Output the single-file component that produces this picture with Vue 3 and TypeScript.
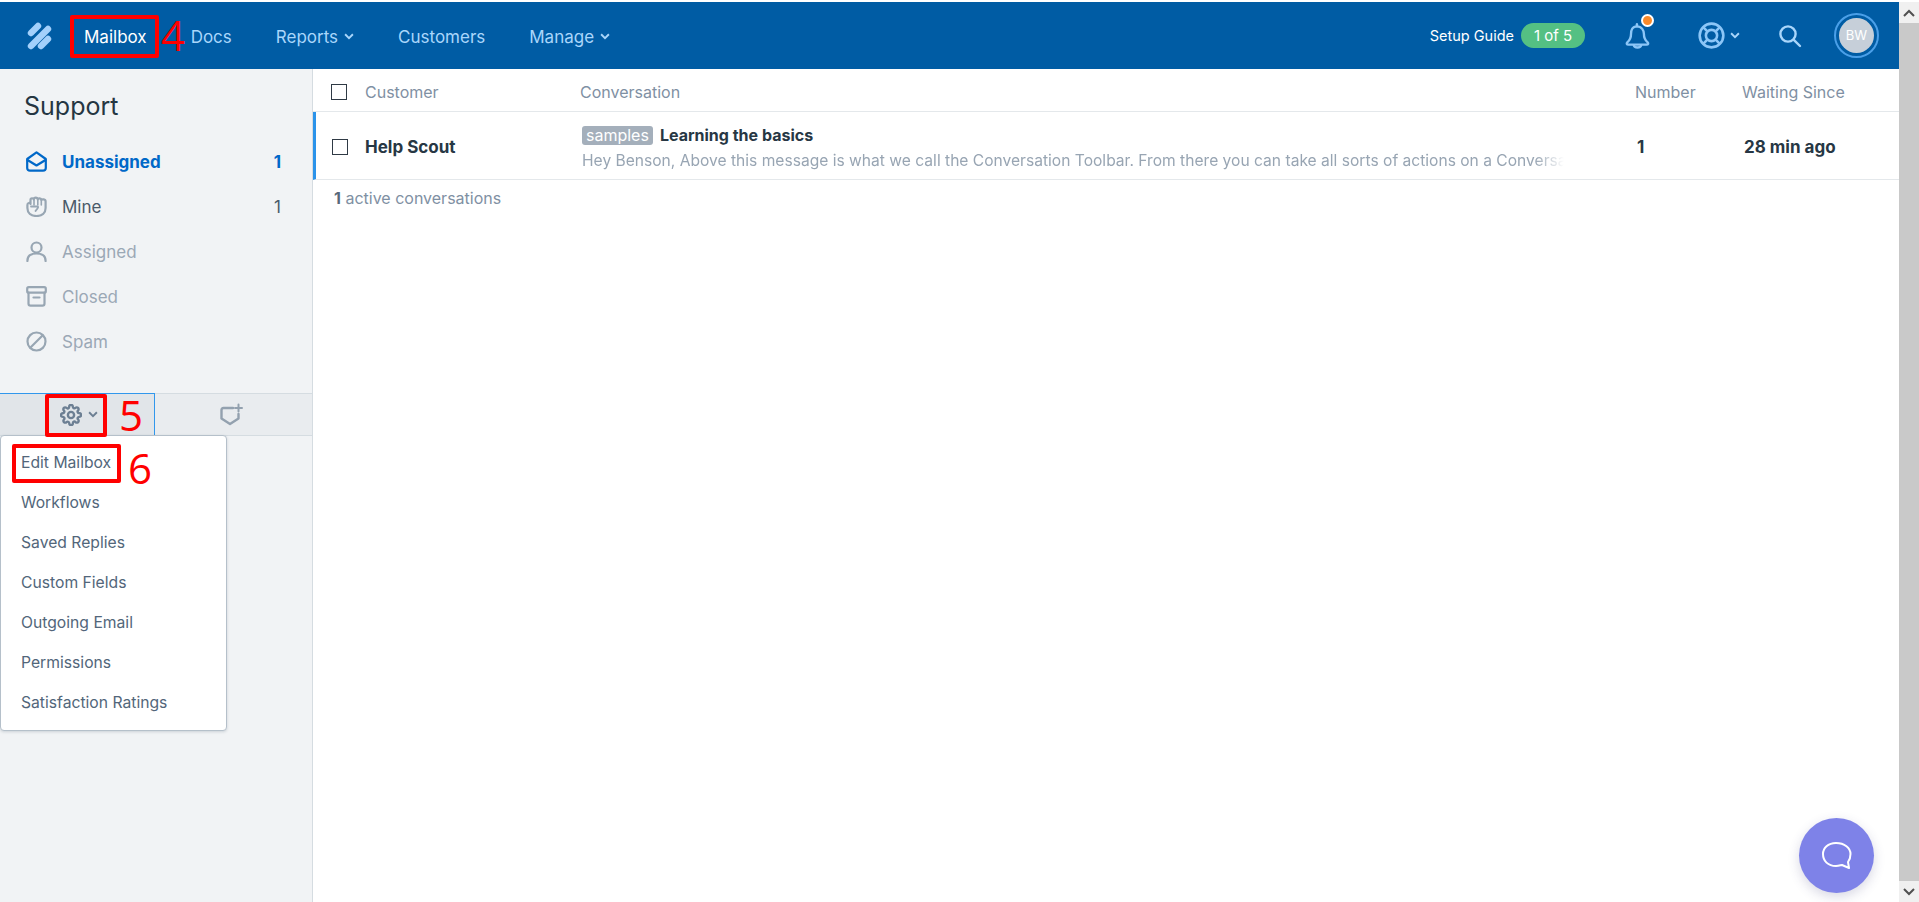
<script setup lang="ts">
const navLinks = [
  { label: 'Mailbox', active: true },
  { label: 'Docs' },
  { label: 'Reports', caret: true },
  { label: 'Customers' },
  { label: 'Manage', caret: true },
]

const folders = [
  { label: 'Unassigned', count: 1, kind: 'active', icon: 'inbox' },
  { label: 'Mine', count: 1, kind: 'normal', icon: 'hand' },
  { label: 'Assigned', kind: 'muted', icon: 'person' },
  { label: 'Closed', kind: 'muted', icon: 'archive' },
  { label: 'Spam', kind: 'muted', icon: 'ban' },
]

const menuItems = [
  'Edit Mailbox',
  'Workflows',
  'Saved Replies',
  'Custom Fields',
  'Outgoing Email',
  'Permissions',
  'Satisfaction Ratings',
]
</script>

<template>
  <div class="page">
    <div class="main">
      <header class="topbar">
        <svg class="logo" width="25" height="28" viewBox="0 0 25 28" fill="none" stroke="#a3d0fb" stroke-width="6.4" stroke-linecap="round">
          <path d="M4 11 L11 4" />
          <path d="M4 24 L21 7" />
          <path d="M14 24 L21 17" />
        </svg>
        <nav class="nav">
          <a v-for="link in navLinks" :key="link.label" class="nav-link" :class="{ 'nav-active': link.active }">
            {{ link.label }}
            <svg v-if="link.caret" class="caret" width="10" height="7" viewBox="0 0 9 6"><path d="M1 1 L4.5 4.5 L8 1" /></svg>
          </a>
        </nav>
        <div class="top-right">
          <span class="setup">Setup Guide</span>
          <span class="pill">1 of 5</span>
          <span class="bell">
            <svg width="28" height="30" viewBox="0 0 26 28" fill="none" stroke="#8cc6f7" stroke-width="2.2" stroke-linejoin="round" stroke-linecap="round">
              <path d="M12 5 C7.5 5 6.5 9 6.5 12 C6.5 16 5.5 18 3 20 C2 21 2.5 22 4 22 L21 22 C22.5 22 23 21 22 20 C19.5 18 18.5 16 18.5 12 C18.5 9 16.5 5 12 5 Z" />
              <path d="M12 5 V3" />
              <path d="M9 22.5 C9.5 25.5 15.5 25.5 16 22.5" />
            </svg>
            <i class="dot"></i>
          </span>
          <span class="help">
            <svg width="27" height="27" viewBox="0 0 26 26" fill="none" stroke="#8cc6f7" stroke-width="2.5">
              <circle cx="13" cy="13" r="11.4" />
              <circle cx="13" cy="13" r="5.4" />
              <path d="M5 5 L9 9 M21 5 L17 9 M5 21 L9 17 M21 21 L17 17" />
            </svg>
            <svg class="caret" width="10" height="7" viewBox="0 0 9 6"><path d="M1 1 L4.5 4.5 L8 1" /></svg>
          </span>
          <svg class="search" width="24" height="24" viewBox="0 0 24 24" fill="none" stroke="#a9d6fb" stroke-width="2.4" stroke-linecap="round">
            <circle cx="10" cy="10" r="7.6" />
            <path d="M15.8 15.8 L22 22" />
          </svg>
          <span class="avatar-ring"><span class="avatar">BW</span></span>
        </div>
      </header>

      <div class="body">
        <aside class="sidebar">
          <h1 class="title">Support</h1>
          <ul class="folders">
            <li v-for="f in folders" :key="f.label" class="folder" :class="f.kind">
              <svg class="ficon" width="21" height="21" viewBox="0 0 21 21" fill="none" stroke="currentColor" stroke-width="2.2" stroke-linejoin="round" stroke-linecap="round">
                <template v-if="f.icon === 'inbox'">
                  <path d="M1.2 8 L10.5 1.3 L19.8 8 V17 Q19.8 19.6 17 19.6 H4 Q1.2 19.6 1.2 17 Z" />
                  <path d="M1.5 9 L10.5 14.5 L19.5 9" />
                </template>
                <template v-else-if="f.icon === 'hand'">
                  <path d="M1.4 9 C1.4 6.5 4 6.5 4.5 8 V3.8 C4.5 1.8 7.5 1.8 7.8 3.5 C8 1 11.5 1 11.8 3.5 C12.2 1.8 15.2 2 15.3 4 C16 3 19.6 3 19.6 5.5 V12 C19.6 17 16 20 10.5 20 C5 20 1.4 17 1.4 12 Z" />
                  <path d="M8 4 V9 M11.8 4 V9 M15.3 4.5 V9" stroke-width="1.6" />
                  <path d="M5 10.5 H12 C13 12 10.5 13 9.5 15" stroke-width="1.8" />
                </template>
                <template v-else-if="f.icon === 'person'">
                  <circle cx="10.5" cy="6.5" r="5" />
                  <path d="M1.4 20 C1.4 14.5 5 12.5 10.5 12.5 C16 12.5 19.6 14.5 19.6 20" />
                </template>
                <template v-else-if="f.icon === 'archive'">
                  <rect x="1.2" y="1.2" width="18.6" height="5.5" rx="1.5" />
                  <path d="M2.5 6.7 V17.5 Q2.5 19.6 4.5 19.6 H16.5 Q18.5 19.6 18.5 17.5 V6.7" />
                  <path d="M7.5 11.5 H13.5" />
                </template>
                <template v-else>
                  <circle cx="10.5" cy="10.5" r="9" />
                  <path d="M4.5 16.5 L16.5 4.5" />
                </template>
              </svg>
              <span class="flabel">{{ f.label }}</span>
              <span v-if="f.count" class="fcount">{{ f.count }}</span>
            </li>
          </ul>

          <div class="tools">
            <button class="tool tool-open">
              <svg width="22" height="22" viewBox="0 0 24 24" fill="none" stroke="#6c7f93" stroke-width="2.6">
                <circle cx="12" cy="12" r="3.4" />
                <path d="M19.4 15a1.65 1.65 0 0 0 .33 1.82l.06.06a2 2 0 0 1 0 2.83 2 2 0 0 1-2.83 0l-.06-.06a1.65 1.65 0 0 0-1.82-.33 1.65 1.65 0 0 0-1 1.51V21a2 2 0 0 1-2 2 2 2 0 0 1-2-2v-.09A1.65 1.65 0 0 0 9 19.4a1.65 1.65 0 0 0-1.82.33l-.06.06a2 2 0 0 1-2.83 0 2 2 0 0 1 0-2.83l.06-.06a1.65 1.65 0 0 0 .33-1.82 1.65 1.65 0 0 0-1.51-1H3a2 2 0 0 1-2-2 2 2 0 0 1 2-2h.09A1.65 1.65 0 0 0 4.6 9a1.65 1.65 0 0 0-.33-1.82l-.06-.06a2 2 0 0 1 0-2.83 2 2 0 0 1 2.83 0l.06.06a1.65 1.65 0 0 0 1.82.33H9a1.65 1.65 0 0 0 1-1.51V3a2 2 0 0 1 2-2 2 2 0 0 1 2 2v.09a1.65 1.65 0 0 0 1 1.51 1.65 1.65 0 0 0 1.82-.33l.06-.06a2 2 0 0 1 2.83 0 2 2 0 0 1 0 2.83l-.06.06a1.65 1.65 0 0 0-.33 1.82V9a1.65 1.65 0 0 0 1.51 1H21a2 2 0 0 1 2 2 2 2 0 0 1-2 2h-.09a1.65 1.65 0 0 0-1.51 1z" />
              </svg>
              <svg class="caret dark" width="10" height="7" viewBox="0 0 9 6"><path d="M1 1 L4.5 4.5 L8 1" /></svg>
            </button>
            <button class="tool tool-new">
              <svg width="24" height="24" viewBox="0 0 24 24" fill="none" stroke="#93a1af" stroke-width="2.4" stroke-linecap="round" stroke-linejoin="round">
                <path d="M14 5 H4.5 Q2.5 5 2.5 7 V15.5 L11 21 L19.5 15.5 V11" />
                <path d="M19.5 1.5 V8.5 M16 5 H23" stroke-width="2" />
              </svg>
            </button>
          </div>

          <ul class="menu">
            <li v-for="item in menuItems" :key="item" class="menu-item">{{ item }}</li>
          </ul>
        </aside>

        <section class="content">
          <div class="row head">
            <span class="check"></span>
            <span>Customer</span>
            <span>Conversation</span>
            <span>Number</span>
            <span>Waiting Since</span>
          </div>
          <div class="row ticket">
            <span class="check"></span>
            <span class="customer">Help Scout</span>
            <div class="conv">
              <div class="subject"><span class="tag">samples</span><b>Learning the basics</b></div>
              <div class="preview">Hey Benson, Above this message is what we call the Conversation Toolbar. From there you can take all sorts of actions on a Conversation</div>
            </div>
            <span class="strong">1</span>
            <span class="strong">28 min ago</span>
          </div>
          <p class="summary"><b>1</b> active conversations</p>
        </section>
      </div>
    </div>

    <div class="scrollbar">
      <span class="sb-btn"><svg width="12" height="8" viewBox="0 0 12 8"><path d="M1 7 L6 2 L11 7" /></svg></span>
      <span class="sb-thumb"></span>
      <span class="sb-btn"><svg width="12" height="8" viewBox="0 0 12 8"><path d="M1 1 L6 6 L11 1" /></svg></span>
    </div>

    <button class="chat">
      <svg width="32" height="30" viewBox="0 0 32 30" fill="none" stroke="#fff" stroke-width="2">
        <path d="M15 2 C7 2 2 7 2 13 C2 20 7 25 15 25 C18 25 20 24 21 24 L28 27 L27 21 C28.5 19 29.5 16.5 29.5 13 C29.5 7 23.5 2 15 2 Z" stroke-linejoin="round" />
      </svg>
    </button>

    <!-- red annotations drawn on top of the screenshot -->
    <span class="mark mark-nav"></span>
    <span class="num num-4">4</span>
    <span class="mark mark-gear"></span>
    <span class="num num-5">5</span>
    <span class="mark mark-edit"></span>
    <span class="num num-6">6</span>
  </div>
</template>

<style scoped>
.page {
  position: relative;
  display: flex;
  height: 902px;
  overflow: hidden;
  font-family: Inter, "Noto Sans", sans-serif;
  font-size: 16px;
  color: #314351;
  background: #fff;
}
.main {
  flex: 1;
  min-width: 0;
  display: flex;
  flex-direction: column;
  padding-top: 2px;
}
.topbar {
  height: 67px;
  flex: none;
  display: flex;
  align-items: center;
  background: #005ca4;
  padding-left: 27px;
  padding-right: 20px;
}
.logo {
  margin-right: 32px;
}
.nav {
  display: flex;
  gap: 44px;
  font-size: 17px;
  padding-top: 2px;
}
.nav-link {
  color: #a9d6fb;
  display: flex;
  align-items: center;
  gap: 6px;
}
.nav-active {
  color: #fff;
}
.caret {
  fill: none;
  stroke: #a9d6fb;
  stroke-width: 1.7;
}
.caret.dark {
  stroke: #6c7f93;
}
.top-right {
  margin-left: auto;
  display: flex;
  align-items: center;
}
.setup {
  color: #fff;
  font-size: 14.5px;
}
.pill {
  margin-left: 7px;
  width: 64px;
  height: 25px;
  line-height: 25px;
  border-radius: 13px;
  background: #54c083;
  color: #fff;
  text-align: center;
  font-size: 15px;
}
.bell {
  position: relative;
  margin-left: 39px;
  display: flex;
}
.dot {
  position: absolute;
  top: -7px;
  right: -2px;
  width: 9px;
  height: 9px;
  border-radius: 50%;
  background: #f98a2b;
  border: 2px solid #fff;
}
.help {
  margin-left: 46px;
  display: flex;
  align-items: center;
  gap: 5px;
}
.search {
  margin-left: 38px;
}
.avatar-ring {
  margin-left: 32px;
  width: 45px;
  height: 45px;
  box-sizing: border-box;
  border: 2px solid #4a9fe8;
  border-radius: 50%;
  display: flex;
  align-items: center;
  justify-content: center;
}
.avatar {
  width: 35px;
  height: 35px;
  line-height: 35px;
  border-radius: 50%;
  background: #c6cfd9;
  color: #fff;
  font-size: 13px;
  text-align: center;
}
.body {
  flex: 1;
  display: flex;
  min-height: 0;
}
.sidebar {
  width: 312px;
  flex: none;
  background: #f1f3f5;
  border-right: 1px solid #d5dce1;
  display: flex;
  flex-direction: column;
}
.title {
  margin: 0;
  padding: 20px 0 0 24px;
  font-size: 25px;
  line-height: 34px;
  font-weight: 400;
  color: #253642;
}
.folders {
  list-style: none;
  margin: 16px 0 0;
  padding: 0 31px 0 26px;
  height: 254px;
}
.folder {
  height: 45px;
  display: flex;
  align-items: center;
  font-size: 17px;
}
.ficon {
  flex: none;
  margin-right: 15px;
  color: #98a6b3;
}
.fcount {
  margin-left: auto;
}
.active {
  color: #0068c8;
  font-weight: 700;
}
.active .ficon {
  color: #0068c8;
}
.normal {
  color: #4a5a69;
}
.muted {
  color: #9ba8b5;
}
.tools {
  display: flex;
  height: 43px;
  flex: none;
  box-sizing: border-box;
  border-top: 1px solid #d5dce1;
  border-bottom: 1px solid #d5dce1;
  background: #e9ecef;
}
.tool {
  flex: 1;
  border: 0;
  background: none;
  padding: 0;
  display: flex;
  align-items: center;
  justify-content: center;
  gap: 6px;
}
.tool-open {
  flex: none;
  width: 155px;
  margin-top: -1px;
  padding-left: 4px;
  background: #e1e5e9;
  border-top: 1px solid #3197ec;
  border-right: 1px solid #3197ec;
}
.tool-new {
  padding-right: 5px;
}
.menu {
  list-style: none;
  margin: -1px 0 0;
  padding: 7px 0;
  width: 227px;
  box-sizing: border-box;
  background: #fff;
  border: 1px solid #b5c0ca;
  border-radius: 4px;
  box-shadow: 0 1px 3px rgba(60, 80, 100, 0.2);
}
.menu-item {
  height: 40px;
  line-height: 40px;
  padding-left: 20px;
  color: #52667a;
  font-size: 15.7px;
}
.content {
  flex: 1;
  min-width: 0;
}
.row {
  display: grid;
  grid-template-columns: 52px 215px 1055px 107px 1fr;
  align-items: center;
  border-bottom: 1px solid #e4e8eb;
}
.head {
  height: 43px;
  box-sizing: border-box;
  padding-top: 4px;
  color: #7f90a3;
  font-size: 16px;
}
.check {
  width: 16px;
  height: 16px;
  box-sizing: border-box;
  border: 1px solid #2f3a45;
  margin-left: 18px;
  background: #fff;
}
.ticket {
  height: 68px;
  box-sizing: border-box;
  border-left: 3px solid #2b93ea;
  grid-template-columns: 49px 215px 1057px 107px 1fr;
}
.ticket .check {
  margin-left: 16px;
  margin-top: 2px;
}
.customer,
.strong {
  font-weight: 700;
  font-size: 17px;
  color: #273744;
  padding-top: 2px;
}
.conv {
  min-width: 0;
  padding-left: 2px;
}
.subject {
  display: flex;
  align-items: center;
  font-size: 16px;
  color: #273744;
  padding-top: 4px;
}
.tag {
  background: #a4afbb;
  color: #fff;
  border-radius: 3px;
  padding: 0 4px;
  height: 19px;
  line-height: 19px;
  margin-right: 7px;
}
.preview {
  width: 982px;
  margin-top: 6px;
  color: #98a5b3;
  font-size: 15.6px;
  line-height: 19px;
  white-space: nowrap;
  overflow: hidden;
  -webkit-mask-image: linear-gradient(to right, #000 97%, transparent);
  mask-image: linear-gradient(to right, #000 97%, transparent);
}
.summary {
  margin: 8px 0 0 21px;
  color: #7f90a3;
  font-size: 16px;
  line-height: 20px;
}
.summary b {
  color: #58687a;
}
.scrollbar {
  width: 20px;
  flex: none;
  margin-top: 2px;
  display: flex;
  flex-direction: column;
  background: #c9c9c9;
}
.sb-btn {
  height: 21px;
  background: #f0f0f0;
  display: flex;
  align-items: center;
  justify-content: center;
}
.sb-btn svg {
  fill: none;
  stroke: #505050;
  stroke-width: 2;
}
.sb-thumb {
  flex: 1;
}
.chat {
  position: absolute;
  left: 1799px;
  top: 818px;
  width: 75px;
  height: 75px;
  border-radius: 50%;
  border: 0;
  padding: 0;
  background: #7e82e8;
  box-shadow: 0 4px 12px rgba(60, 60, 120, 0.2);
  display: flex;
  align-items: center;
  justify-content: center;
}
.mark {
  position: absolute;
  box-sizing: border-box;
  border: 4px solid #f00;
  border-radius: 2px;
}
.mark-nav {
  left: 70px;
  top: 15px;
  width: 89px;
  height: 43px;
}
.mark-gear {
  left: 45px;
  top: 394px;
  width: 62px;
  height: 43px;
}
.mark-edit {
  left: 12px;
  top: 444px;
  width: 109px;
  height: 39px;
}
.num {
  position: absolute;
  color: #f00;
  font-family: "Open Sans", sans-serif;
  font-size: 42px;
  line-height: 40px;
}
.num-4 {
  left: 161px;
  top: 15px;
}
.num-5 {
  left: 119px;
  top: 395px;
}
.num-6 {
  left: 128px;
  top: 448px;
}
</style>
